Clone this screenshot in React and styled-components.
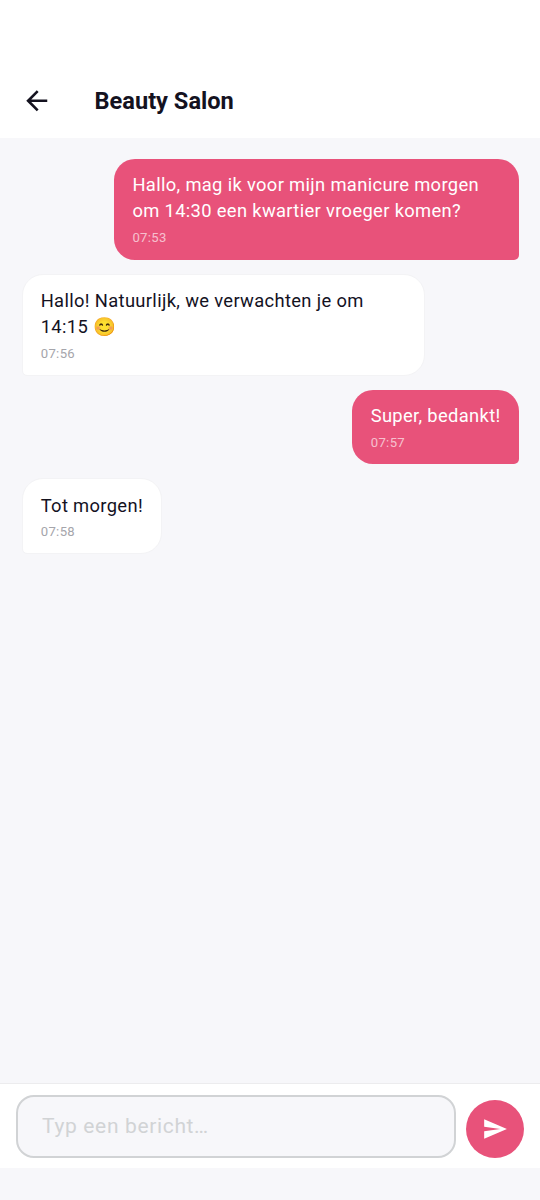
import React, { useState } from 'react'
import styled, { createGlobalStyle } from 'styled-components'

const GlobalStyle = createGlobalStyle`
  * {
    box-sizing: border-box;
  }

  body {
    margin: 0;
    background-color: #f7f7fa;
    font-family: Roboto, "Noto Color Emoji", sans-serif;
    color: #14121f;
  }
`

const Screen = styled.div`
  display: flex;
  flex-direction: column;
  height: 1200px;
  padding-bottom: 32px;
`

const Header = styled.header`
  display: flex;
  align-items: center;
  gap: 42px;
  height: 138px;
  padding: 63px 21px 0;
  background-color: white;
`

const IconButton = styled.button`
  display: flex;
  padding: 0;
  border: none;
  background: none;
  color: #14121f;
`

const Title = styled.h1`
  margin: 0;
  font-size: 23.6px;
  font-weight: 700;
  line-height: 32px;
`

const Messages = styled.main`
  flex: 1;
  display: flex;
  flex-direction: column;
  gap: 14px;
  padding: 20.6px 21px 20.6px 21.5px;
`

const Bubble = styled.div`
  align-self: ${props => props.$mine ? 'flex-end' : 'flex-start'};
  max-width: ${props => props.$mine ? '405px' : '403px'};
  padding: ${props => props.$mine ? '13.6px 18.4px 12.7px' : '13.4px 18.2px 11.9px'};
  border: ${props => props.$mine ? 'none' : '1px solid #f3f3f5'};
  border-radius: ${props => props.$mine ? '21px 21px 5px 21px' : '21px 21px 21px 5px'};
  background-color: ${props => props.$mine ? '#e8527a' : 'white'};
  color: ${props => props.$mine ? 'white' : '#14121f'};
`

const Text = styled.p`
  margin: 0;
  font-size: 18.35px;
  line-height: 26.2px;
  letter-spacing: 0.34px;
`

const Time = styled.time`
  display: block;
  margin-top: 4.3px;
  font-size: 13.1px;
  line-height: 18px;
  letter-spacing: 0.35px;
  color: ${props => props.$mine ? 'rgba(255, 255, 255, 0.65)' : '#a5a5ab'};
`

const Composer = styled.form`
  display: flex;
  align-items: flex-end;
  gap: 10.5px;
  height: 85px;
  padding: 0 15.6px 10px;
  border-top: 1.3px solid #ececee;
  background-color: white;
`

const Input = styled.input`
  flex: 1;
  min-width: 0;
  height: 63px;
  padding: 0 24.4px 2px;
  border: 2px solid #d1d3d5;
  border-radius: 18px;
  background-color: #f7f7fa;
  font-family: inherit;
  font-size: 21px;
  letter-spacing: 0.65px;
  color: #14121f;

  &::placeholder {
    color: #d1d3d5;
    opacity: 1;
  }
`

const SendButton = styled.button`
  display: flex;
  align-items: center;
  justify-content: center;
  width: 58px;
  height: 58px;
  padding: 0;
  border: none;
  border-radius: 50%;
  background-color: #e8527a;
  color: white;
`

const messages = [
  { mine: true, text: 'Hallo, mag ik voor mijn manicure morgen om 14:30 een kwartier vroeger komen?', time: '07:53' },
  { mine: false, text: 'Hallo! Natuurlijk, we verwachten je om 14:15 😊', time: '07:56' },
  { mine: true, text: 'Super, bedankt!', time: '07:57' },
  { mine: false, text: 'Tot morgen!', time: '07:58' }
]

const App = () => {
  const [draft, setDraft] = useState('')

  return (
    <Screen>
      <GlobalStyle />
      <Header>
        <IconButton aria-label='Terug'>
          <svg width='31.5' height='31.5' viewBox='0 0 24 24' fill='currentColor'>
            <path d='M20 11H7.83l5.59-5.59L12 4l-8 8 8 8 1.41-1.41L7.83 13H20v-2z' />
          </svg>
        </IconButton>
        <Title>Beauty Salon</Title>
      </Header>
      <Messages>
        {messages.map(({ mine, text, time }) => (
          <Bubble key={time} $mine={mine}>
            <Text>{text}</Text>
            <Time $mine={mine}>{time}</Time>
          </Bubble>
        ))}
      </Messages>
      <Composer onSubmit={(event) => event.preventDefault()}>
        <Input
          type='text'
          placeholder='Typ een bericht…'
          value={draft}
          onChange={(event) => setDraft(event.target.value)} />
        <SendButton type='submit' aria-label='Verstuur'>
          <svg width='26' height='26' viewBox='0 0 24 24' fill='currentColor'>
            <path d='M2 21l21-9L2 3v7l15 2-15 2v7z' />
          </svg>
        </SendButton>
      </Composer>
    </Screen>
  )
}

export default App
